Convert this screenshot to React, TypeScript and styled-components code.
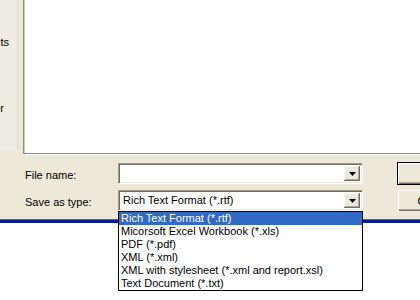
import React from "react";
import styled, { createGlobalStyle } from "styled-components";

const fileTypes = [
  "Rich Text Format (*.rtf)",
  "Micorsoft Excel Workbook (*.xls)",
  "PDF (*.pdf)",
  "XML (*.xml)",
  "XML with stylesheet (*.xml and report.xsl)",
  "Text Document (*.txt)",
];

// only the tail of each places-bar label peeks out of the narrow strip
const places = [
  { label: "Documents", top: 36, inset: 9 },
  { label: "My Computer", top: 53, inset: 4 },
];

const ArrowIcon = () => (
  <svg width="7" height="4" viewBox="0 0 7 4">
    <path d="M0 0h7L3.5 4z" fill="#000" />
  </svg>
);

const Combo = ({ value }: { value?: string }) => (
  <ComboBox>
    <ComboText>{value}</ComboText>
    <DropButton>
      <ArrowIcon />
    </DropButton>
  </ComboBox>
);

const App = () => {
  return (
    <>
      <GlobalStyle />
      <Page>
        <Window>
          <TopArea>
            <PlacesBar>
              {places.map((p) => (
                <PlaceLabel key={p.label} $top={p.top} $inset={p.inset}>
                  {p.label}
                </PlaceLabel>
              ))}
            </PlacesBar>
            <FileList />
          </TopArea>
          <Form>
            <Label>File name:</Label>
            <Combo />
            <Buttons>
              <Button $default>Save</Button>
              <Button>Cancel</Button>
            </Buttons>
            <Label>Save as type:</Label>
            <ComboWrap>
              <Combo value={fileTypes[0]} />
              <DropList>
                {fileTypes.map((t, i) => (
                  <ListItem key={t} $selected={i === 0}>
                    {t}
                  </ListItem>
                ))}
              </DropList>
            </ComboWrap>
          </Form>
        </Window>
      </Page>
    </>
  );
};

export default App;

const GlobalStyle = createGlobalStyle`
  body {
    margin: 0;
    background: #ffffff;
    font-family: "Liberation Sans", Arial, sans-serif;
    font-size: 11px;
    color: #000;
  }
`;

const Page = styled.div`
  width: 420px;
  height: 300px;
  overflow: hidden;
  background: #ffffff;
`;

const Window = styled.div`
  width: 420px;
  height: 220px;
  background: #ece9d8;
  border-bottom: 3px solid #0a1f8f;
  box-shadow: inset 0 -1px 0 #3a62d8;
  position: relative;
`;

const TopArea = styled.div`
  display: flex;
  height: 154px;
  gap: 4px;
`;

const PlacesBar = styled.div`
  width: 17px;
  height: 151px;
  background: #efede2;
  border-right: 1px solid #dcd9c8;
  overflow: hidden;
  display: flex;
  flex-direction: column;
`;

const PlaceLabel = styled.div<{ $top: number; $inset: number }>`
  margin-top: ${(p) => p.$top}px;
  display: flex;
  justify-content: flex-end;
  white-space: nowrap;
  padding-right: ${(p) => 17 - p.$inset}px;
  line-height: 13px;
`;

const FileList = styled.div`
  flex: 1;
  margin-left: 1px;
  background: #ffffff;
  border-left: 1px solid #8d8b80;
  border-bottom: 1px solid #8d8b80;
  box-shadow: inset 1px 0 0 #c9c6b6, 0 1px 0 #ffffff;
`;

const Form = styled.div`
  display: grid;
  grid-template-columns: 93px 245px 1fr;
  grid-template-rows: 21px 21px;
  row-gap: 6px;
  padding-left: 25px;
  margin-top: 9px;
  align-items: center;
`;

const Label = styled.div`
  line-height: 13px;
  padding-top: 3px;
`;

const ComboWrap = styled.div`
  position: relative;
`;

const ComboBox = styled.div`
  height: 21px;
  box-sizing: border-box;
  display: flex;
  align-items: stretch;
  background: #ffffff;
  border-top: 1px solid #9d9a8c;
  border-left: 1px solid #9d9a8c;
  border-right: 1px solid #ffffff;
  border-bottom: 1px solid #ffffff;
  box-shadow: inset 1px 1px 0 #716f64, inset -1px -1px 0 #ece9d8;
  padding: 2px;
`;

const ComboText = styled.div`
  flex: 1;
  padding-left: 2px;
  line-height: 15px;
`;

const DropButton = styled.div`
  width: 16px;
  display: flex;
  align-items: center;
  justify-content: center;
  background: #ece9d8;
  box-shadow: inset -1px -1px 0 #716f64, inset 1px 1px 0 #ffffff,
    inset -2px -2px 0 #aca899;
`;

const DropList = styled.div`
  position: absolute;
  top: 21px;
  left: 0;
  width: 245px;
  box-sizing: border-box;
  border: 1px solid #000;
  background: #ffffff;
  z-index: 2;
`;

const ListItem = styled.div<{ $selected?: boolean }>`
  height: 13px;
  line-height: 13px;
  padding-left: 2px;
  white-space: nowrap;
  background: ${(p) => (p.$selected ? "#316ac5" : "transparent")};
  color: ${(p) => (p.$selected ? "#ffffff" : "#000000")};
`;

const Buttons = styled.div`
  grid-row: 1 / span 2;
  grid-column: 3;
  align-self: start;
  display: flex;
  flex-direction: column;
  gap: 4px;
  margin-left: 34px;
  margin-top: -1px;
`;

const Button = styled.div<{ $default?: boolean }>`
  width: 75px;
  height: 23px;
  flex-shrink: 0;
  box-sizing: border-box;
  display: flex;
  align-items: center;
  justify-content: center;
  background: #ece9d8;
  border: 1px solid ${(p) => (p.$default ? "#000000" : "transparent")};
  box-shadow: inset 1px 1px 0 #ffffff, inset -1px -1px 0 #716f64,
    inset -2px -2px 0 #aca899;
`;
